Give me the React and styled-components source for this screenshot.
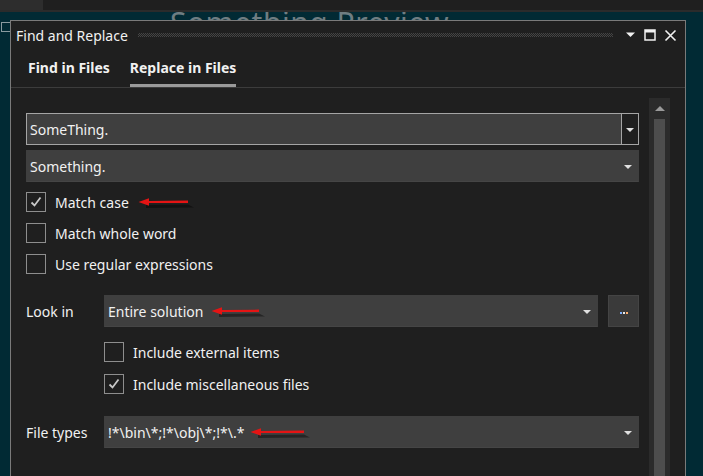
import React from 'react'
import styled, { createGlobalStyle } from 'styled-components'

const Global = createGlobalStyle`
html, body {
  margin: 0;
  padding: 0;
  background: #012a34;
}
body {
  font-family: "Noto Sans", "Open Sans", sans-serif;
  overflow: hidden;
}
`

const Screen = styled.div`
width: 703px;
height: 476px;
display: flex;
flex-direction: column;
overflow: hidden;
`

const TopBar = styled.div`
height: 10px;
display: flex;
background: #1f1f1f;
border-bottom: 2px solid #2b2b2b;
`

const TopTab = styled.div`
width: 43px;
background: #2d2d2d;
`

const Workspace = styled.div`
flex: 1;
position: relative;
background: #012a34;
overflow: hidden;
`

const EditorText = styled.div`
margin: -9px 0 0 170px;
font-size: 30px;
line-height: 40px;
color: #6f7d82;
letter-spacing: 0.5px;
white-space: nowrap;
`

const Gutter = styled.div`
position: absolute;
left: 1px;
top: 10px;
width: 9px;
height: 8px;
border: 1px solid #8a9a9f;
border-right: none;
`

const Dialog = styled.div`
position: absolute;
left: 10px;
top: 8px;
width: 674px;
height: 480px;
background: #1f1f1f;
border: 1px solid #7a7a7a;
display: flex;
flex-direction: column;
color: #f1f1f1;
`

const TitleBar = styled.div`
height: 28px;
display: flex;
align-items: center;
padding: 0 8px 0 5px;
font-size: 14px;
`

const Gripper = styled.div`
flex: 1;
height: 4px;
margin: 0 12px 0 10px;
background-image:
  linear-gradient(45deg, #454545 25%, transparent 25%, transparent 75%, #454545 75%),
  linear-gradient(45deg, #454545 25%, transparent 25%, transparent 75%, #454545 75%);
background-size: 2px 2px;
background-position: 0 0, 1px 1px;
`

const TitleIcons = styled.div`
display: flex;
align-items: center;
gap: 8px;
`

const Tabs = styled.div`
display: flex;
gap: 20px;
padding: 0 0 0 17px;
height: 38px;
border-bottom: 1px solid #3c3c3c;
`

const Tab = styled.div`
display: flex;
align-items: center;
font-size: 14px;
font-weight: bold;
color: #f1f1f1;
padding-top: 2px;
border-bottom: 3px solid ${p => (p.$active ? '#9a9a9a' : 'transparent')};
box-sizing: border-box;
`

const Body = styled.div`
flex: 1;
display: flex;
`

const Content = styled.div`
flex: 1;
padding: 25px 10px 0 15px;
display: flex;
flex-direction: column;
`

const Scrollbar = styled.div`
width: 21px;
margin: 10px 15px 0 0;
background: #2b2b2b;
display: flex;
flex-direction: column;
align-items: center;
`

const ScrollUp = styled.div`
margin-top: 8px;
width: 0;
height: 0;
border-left: 5px solid transparent;
border-right: 5px solid transparent;
border-bottom: 5px solid #9a9a9a;
`

const Thumb = styled.div`
margin-top: 8px;
width: 11px;
flex: 1;
background: #4d4d4d;
`

const Combo = styled.div`
height: 32px;
box-sizing: border-box;
display: flex;
align-items: stretch;
background: #3f3f3f;
border: 1px solid ${p => (p.$focused ? '#a5a5a5' : '#3f3f3f')};
border-bottom-color: ${p => (p.$focused ? '#a5a5a5' : '#454545')};
flex: ${p => (p.$grow ? 1 : 'none')};
margin-top: ${p => p.$top || 0}px;
`

const ComboText = styled.div`
flex: 1;
display: flex;
align-items: center;
padding-left: 3px;
font-size: 14px;
color: #f1f1f1;
white-space: nowrap;
`

const ComboButton = styled.div`
width: 16px;
display: flex;
align-items: center;
justify-content: center;
background: ${p => (p.$focused ? '#1f1f1f' : 'transparent')};
border-left: 1px solid ${p => (p.$focused ? '#a5a5a5' : 'transparent')};
padding-right: ${p => (p.$focused ? 0 : 2)}px;
`

const Caret = styled.div`
width: 0;
height: 0;
border-left: 4px solid transparent;
border-right: 4px solid transparent;
border-top: 4px solid #e0e0e0;
margin-top: 1px;
`

const CheckRow = styled.label`
display: flex;
align-items: center;
gap: 9px;
height: 20px;
margin-top: ${p => p.$top}px;
margin-left: ${p => p.$indent || 0}px;
font-size: 14px;
color: #f1f1f1;
`

const Box = styled.div`
width: 20px;
height: 20px;
box-sizing: border-box;
border: 1px solid #8e8e8e;
background: #1f1f1f;
display: flex;
align-items: center;
justify-content: center;
flex: none;
`

const FieldRow = styled.div`
display: flex;
align-items: center;
margin-top: ${p => p.$top}px;
`

const FieldLabel = styled.div`
width: 78px;
font-size: 14px;
color: #f1f1f1;
`

const DotsButton = styled.div`
width: 31px;
height: 32px;
box-sizing: border-box;
margin-left: 10px;
background: #3a3a3a;
border: 1px solid #444;
display: flex;
align-items: center;
justify-content: center;
gap: 1px;
padding-top: 4px;
`

const Dot = styled.span`
width: 2px;
height: 2px;
background: ${p => p.$c};
`

const ArrowSvg = styled.svg`
flex: none;
margin-left: ${p => p.$gap}px;
margin-top: 2px;
`

const RedArrow = ({ width = 52, gap = 8 }) => (
  <ArrowSvg $gap={gap} width={width + 8} height="14" viewBox={`0 0 ${width + 8} 14`}>
    <path d={`M8 9 L${width} 8.5 L${width + 6} 11.5 L8 12 Z`} fill="#000" opacity="0.4" />
    <path d={`M0.5 6 L11 2.2 L11 5 L${width} 4.6 L${width} 7 L11 7 L11 9.8 Z`} fill="#e41414" />
  </ArrowSvg>
)

const Check = () => (
  <svg width="14" height="14" viewBox="0 0 14 14">
    <path d="M2.5 7.5 L5.5 10.5 L11.5 2.5" fill="none" stroke="#c8c8c8" strokeWidth="1.8" />
  </svg>
)

const CheckItem = ({ checked, children, top, indent, arrow }) => (
  <CheckRow $top={top} $indent={indent}>
    <Box>{checked && <Check />}</Box>
    <span>{children}</span>
    {arrow && <RedArrow width={50} gap={0} />}
  </CheckRow>
)

const App = () => (
  <Screen>
    <Global />
    <TopBar>
      <TopTab />
    </TopBar>
    <Workspace>
      <EditorText>Something Preview</EditorText>
      <Gutter />
      <Dialog>
        <TitleBar>
          <span>Find and Replace</span>
          <Gripper />
          <TitleIcons>
            <svg width="11" height="8" viewBox="0 0 11 8"><path d="M1 1.5 H10 L5.5 6 Z" fill="#f1f1f1" /></svg>
            <svg width="12" height="12" viewBox="0 0 12 12"><rect x="1" y="1" width="10" height="10" fill="none" stroke="#f1f1f1" strokeWidth="1.5" /><rect x="1" y="1" width="10" height="2.5" fill="#f1f1f1" /></svg>
            <svg width="13" height="13" viewBox="0 0 13 13"><path d="M1.5 1.5 L11.5 11.5 M11.5 1.5 L1.5 11.5" stroke="#f1f1f1" strokeWidth="1.6" /></svg>
          </TitleIcons>
        </TitleBar>
        <Tabs>
          <Tab>Find in Files</Tab>
          <Tab $active>Replace in Files</Tab>
        </Tabs>
        <Body>
          <Content>
            <Combo $focused>
              <ComboText>SomeThing.</ComboText>
              <ComboButton $focused><Caret /></ComboButton>
            </Combo>
            <Combo $top={5}>
              <ComboText>Something.</ComboText>
              <ComboButton><Caret /></ComboButton>
            </Combo>
            <CheckItem checked top={10} arrow>Match case</CheckItem>
            <CheckItem top={11}>Match whole word</CheckItem>
            <CheckItem top={11}>Use regular expressions</CheckItem>
            <FieldRow $top={21}>
              <FieldLabel>Look in</FieldLabel>
              <Combo $grow>
                <ComboText>Entire solution<RedArrow width={48} gap={8} /></ComboText>
                <ComboButton><Caret /></ComboButton>
              </Combo>
              <DotsButton>
                <Dot $c="#7fb0ff" />
                <Dot $c="#e8e8e8" />
                <Dot $c="#ffb070" />
              </DotsButton>
            </FieldRow>
            <CheckItem top={15} indent={78}>Include external items</CheckItem>
            <CheckItem checked top={12} indent={78}>Include miscellaneous files</CheckItem>
            <FieldRow $top={22}>
              <FieldLabel>File types</FieldLabel>
              <Combo $grow>
                <ComboText>!*\bin\*;!*\obj\*;!*\.*<RedArrow width={54} gap={6} /></ComboText>
                <ComboButton><Caret /></ComboButton>
              </Combo>
            </FieldRow>
          </Content>
          <Scrollbar>
            <ScrollUp />
            <Thumb />
          </Scrollbar>
        </Body>
      </Dialog>
    </Workspace>
  </Screen>
)

export default App
